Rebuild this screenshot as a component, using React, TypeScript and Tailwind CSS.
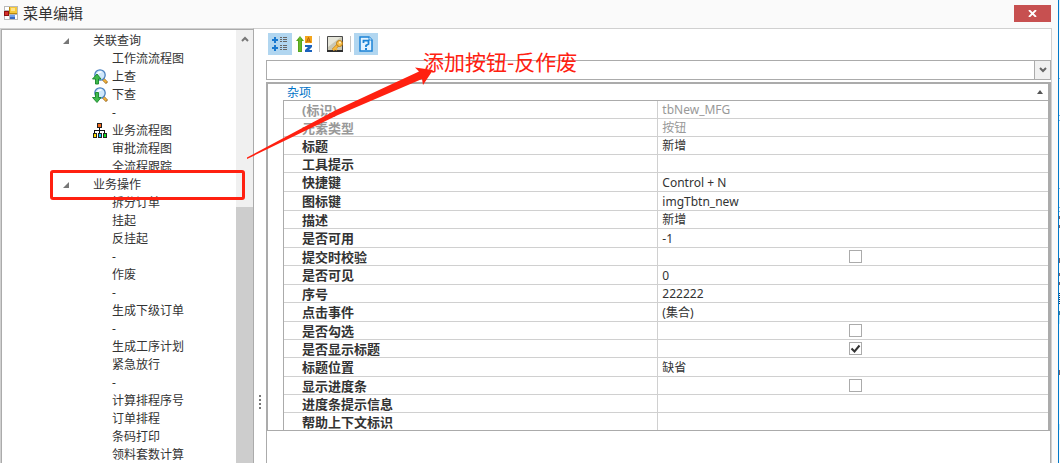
import React from 'react';

type TreeNode = {
  label: string;
  group?: boolean;
  icon?: 'up' | 'down' | 'flow';
};

type Property = {
  name: string;
  value?: string;
  check?: boolean;
  readOnly?: boolean;
  tall?: boolean;
};

const nodes: TreeNode[] = [
  { label: '关联查询', group: true },
  { label: '工作流流程图' },
  { label: '上查', icon: 'up' },
  { label: '下查', icon: 'down' },
  { label: '-' },
  { label: '业务流程图', icon: 'flow' },
  { label: '审批流程图' },
  { label: '全流程跟踪' },
  { label: '业务操作', group: true },
  { label: '拆分订单' },
  { label: '挂起' },
  { label: '反挂起' },
  { label: '-' },
  { label: '作废' },
  { label: '-' },
  { label: '生成下级订单' },
  { label: '-' },
  { label: '生成工序计划' },
  { label: '紧急放行' },
  { label: '-' },
  { label: '计算排程序号' },
  { label: '订单排程' },
  { label: '条码打印' },
  { label: '领料套数计算' },
];

const properties: Property[] = [
  { name: '(标识)', value: 'tbNew_MFG', readOnly: true },
  { name: '元素类型', value: '按钮', readOnly: true },
  { name: '标题', value: '新增' },
  { name: '工具提示', value: '' },
  { name: '快捷键', value: 'Control + N', tall: true },
  { name: '图标键', value: 'imgTbtn_new', tall: true },
  { name: '描述', value: '新增' },
  { name: '是否可用', value: '-1', tall: true },
  { name: '提交时校验', check: false },
  { name: '是否可见', value: '0', tall: true },
  { name: '序号', value: '222222' },
  { name: '点击事件', value: '(集合)', tall: true },
  { name: '是否勾选', check: false },
  { name: '是否显示标题', check: true },
  { name: '标题位置', value: '缺省', tall: true },
  { name: '显示进度条', check: false },
  { name: '进度条提示信息', value: '' },
  { name: '帮助上下文标识', value: '' },
];

const AppIcon = () => (
  <svg width="14" height="14" viewBox="0 0 14 14" shapeRendering="crispEdges">
    <path d="M0 0h14v14H0z" fill="#b9b9b9" />
    <path d="M1 1h4v3H1zM1 10h4v3H1zM11 9h2v4h-2z" fill="#fff" />
    <path d="M5 1h8v7H5z" fill="#b98a10" />
    <path d="M6 1h7v6H6z" fill="#f5c83a" />
    <path d="M7 2h4v3H7z" fill="#ffe48a" />
    <path d="M0 5h5v5H0z" fill="#8e1111" />
    <path d="M1 6h3v3H1z" fill="#d8302a" />
    <path d="M6 9h5v4H6z" fill="#3768c0" />
    <path d="M6 9h5v2H6z" fill="#6fa0ee" />
  </svg>
);

const SearchIcon = ({ down }: { down?: boolean }) => (
  <svg width="16" height="16" viewBox="0 0 16 16">
    <path d="M11 10l4 4" stroke="#8a5a12" strokeWidth="3" />
    <path d="M11 10l3.500 3.500" stroke="#f3b33c" strokeWidth="1.800" />
    <circle cx="8" cy="6" r="5.200" fill="#cfe8fb" stroke="#4a80bf" strokeWidth="1.300" />
    <path d="M5.500 5q1-2.500 4-2" stroke="#fff" strokeWidth="1.500" fill="none" />
    {down ? (
      <path d="M3.500 5.500h3v5h2.500L5 15.500.5 10.500h3z" fill="#3fba4d" stroke="#168528" strokeWidth=".9" />
    ) : (
      <path d="M3.500 15h3v-5h2.500L5 5 .5 10h3z" fill="#3fba4d" stroke="#168528" strokeWidth=".9" />
    )}
  </svg>
);

// one box on top, three below joined by a rail
const FlowIcon = () => (
  <svg width="16" height="16" viewBox="0 0 16 16" shapeRendering="crispEdges">
    <path d="M7 5h1v5H7zM2 7h11v1H2zM2 7h1v3H2zM12 7h1v3h-1z" fill="#111" />
    <path d="M5 0h5v5H5zM1 10h4v5H1zM6 10h4v5H6zM11 10h4v5h-4z" fill="#222" />
    <path d="M6 1h3v3H6z" fill="#f26a1b" />
    <path d="M2 11h2v3H2z" fill="#ffe000" />
    <path d="M7 11h2v3H7z" fill="#12c4f5" />
    <path d="M12 11h2v3h-2z" fill="#12dd22" />
  </svg>
);

const CategoryIcon = () => (
  <svg width="16" height="16" viewBox="0 0 16 16" shapeRendering="crispEdges">
    <path d="M2 1h2v2h2v2H4v2H2V5H0V3h2zM2 9h2v2h2v2H4v2H2v-2H0v-2h2z" fill="#1878cf" />
    <path d="M8 1h2v1H8zM11 1h4v1h-4zM8 3h2v1H8zM11 3h4v1h-4zM8 5h2v1H8zM11 5h4v1h-4zM8 9h2v1H8zM11 9h4v1h-4zM8 11h2v1H8zM11 11h4v1h-4zM8 13h2v1H8zM11 13h4v1h-4z" fill="#666" />
  </svg>
);

const SortIcon = () => (
  <svg width="17" height="16" viewBox="0 0 17 16">
    <path d="M4 0l4 5H6v11H2V5H0z" fill="#56a51c" />
    <path d="M4 1v14" stroke="#7cc63a" />
    <path d="M9 0h7v7H9z" fill="#f4a51c" />
    <path d="M10.500 6.500l2-5 2 5M11 5h3" stroke="#b86405" fill="none" />
    <path d="M9 9h7v2l-3 3h3v2H9v-2l3-3H9z" fill="#1a62bd" />
  </svg>
);

const KeyPageIcon = () => (
  <svg width="16" height="16" viewBox="0 0 16 16">
    <path d="M.5.5h15v15H.5z" fill="#c9c7b4" stroke="#4b4b4b" />
    <path d="M1 1h13L1 11z" fill="#e6e6da" />
    <path d="M0 14h16v2H0z" fill="#2f2f2f" />
    <path d="M11 9l-5 5" stroke="#b87912" strokeWidth="3" />
    <path d="M11 9l-5 5M8 12l2 2" stroke="#f7b93d" strokeWidth="2" />
    <circle cx="12.500" cy="7.500" r="3" fill="#f9c14b" stroke="#bf7d13" />
    <circle cx="13" cy="6.500" r="1" fill="#fff3cf" />
  </svg>
);

const HelpIcon = () => (
  <svg width="14" height="16" viewBox="0 0 14 16">
    <path d="M1 1h9l3 3v11H1z" fill="#e3f3ff" stroke="#1b83d6" strokeWidth="1.500" />
    <path d="M10 1v3h3" fill="#fff" stroke="#1b83d6" />
    <path d="M4.500 7V4.700h5V8L7 9.500V11" fill="none" stroke="#1b83d6" strokeWidth="1.800" />
    <path d="M6 12h2v2H6z" fill="#1b83d6" />
  </svg>
);

const Tree = () => (
  <div className="flex w-[254px] shrink-0 border-l border-t border-r border-l-[#d0d0d0] border-t-[#d0d0d0] border-r-[#ababab]">
    <div className="flex min-w-0 flex-1 border-l border-t border-[#ababab]">
      <ul className="relative min-w-0 flex-1 overflow-hidden pt-0.5">
        {nodes.map((node, idx) => (
          <li key={idx} className="flex h-[18px] items-center whitespace-nowrap text-xs leading-[18px]">
            <span className="flex w-[90px] shrink-0 pl-[61px]">
              {node.group && (
                <svg width="6" height="6" viewBox="0 0 6 6">
                  <path d="M6 0v6H0z" fill="#777" />
                </svg>
              )}
            </span>
            {!node.group && (
              <span className="flex w-5 shrink-0">
                {node.icon === 'up' && <SearchIcon />}
                {node.icon === 'down' && <SearchIcon down />}
                {node.icon === 'flow' && <FlowIcon />}
              </span>
            )}
            <span className={node.group ? 'pl-px' : ''}>{node.label}</span>
          </li>
        ))}
      </ul>
      <div className="flex w-[17px] shrink-0 flex-col bg-[#f0f0f0]">
        <button type="button" aria-label="向上滚动" className="flex h-[17px] items-center justify-center">
          <svg width="8" height="6" viewBox="0 0 8 6">
            <path d="M1 5l3-3 3 3" fill="none" stroke="#777" strokeWidth="2" />
          </svg>
        </button>
        <div className="mt-40 flex-1 bg-[#cdcdcd]" />
      </div>
    </div>
  </div>
);

const Toolbar = () => (
  <div className="flex h-[22px] items-center pl-0.5">
    <button type="button" aria-label="按分类" className="flex h-[22px] w-6 items-center justify-center bg-[#b1d6f0]">
      <CategoryIcon />
    </button>
    <button type="button" aria-label="按字母" className="ml-1 flex w-[17px]">
      <SortIcon />
    </button>
    <span className="ml-1.5 h-4 w-px bg-[#c6c6c6]" />
    <button type="button" aria-label="属性页" className="ml-[7px] flex w-4">
      <KeyPageIcon />
    </button>
    <span className="ml-[7px] h-4 w-px bg-[#c6c6c6]" />
    <button type="button" aria-label="说明" className="ml-[3px] flex h-[22px] w-6 items-center justify-center bg-[#b1d6f0]">
      <HelpIcon />
    </button>
  </div>
);

const PropertyGrid = () => (
  <div className="border border-r-2 border-t-2 border-[#ababab]">
    <div className="flex h-4 items-center justify-between pl-[19px] pr-[5px] text-xs leading-4 text-[#0072c6]">
      <span className="pt-0.5">杂项</span>
      <svg width="6" height="4" viewBox="0 0 6 4">
        <path d="M3 0l3 4H0z" fill="#555" />
      </svg>
    </div>
    <table className="ml-[15px] w-[calc(100%-15px)] table-fixed border-separate border-spacing-0 border-l border-t border-[#ababab]">
      <colgroup>
        <col className="w-[49%]" />
        <col />
      </colgroup>
      <tbody>
        {properties.map((prop) => (
          <tr key={prop.name} className={`group last:h-[17px] ${prop.tall ? 'h-[19px]' : 'h-[18px]'} ${prop.readOnly ? 'text-[#999]' : ''}`}>
            <th
              scope="row"
              className="border-r border-b border-[#d0d0d0] p-0 pl-[18px] text-left text-[13px] leading-4 font-bold group-last:border-b-0"
            >
              {prop.name}
            </th>
            <td className="border-b border-[#d0d0d0] p-0 pl-1 text-xs leading-4 group-last:border-b-0">
              {prop.check === undefined ? (
                <span className="block pt-px">{prop.value}</span>
              ) : (
                <label className="relative mx-auto flex size-[13px]">
                  <input
                    type="checkbox"
                    aria-label={prop.name}
                    defaultChecked={prop.check}
                    className="peer size-[13px] appearance-none border border-[#ababab] bg-white"
                  />
                  <svg className="absolute inset-0 hidden peer-checked:block" width="13" height="13" viewBox="0 0 13 13">
                    <path d="M2.500 6.500l3 3 5-6" fill="none" stroke="#333" strokeWidth="2" />
                  </svg>
                </label>
              )}
            </td>
          </tr>
        ))}
      </tbody>
    </table>
  </div>
);

// sliver of the window behind
const BackWindow = () => (
  <div className="w-px shrink-0 overflow-hidden bg-[#f8fcff]">
    <svg width="1" height="463" viewBox="0 0 1 463" shapeRendering="crispEdges">
      <path d="M0 0h1v20H0z" fill="#e3f0fa" />
      <path d="M0 78h1v1H0zM0 115h1v1H0zM0 120h1v1H0zM0 188h1v1H0zM0 207h1v1H0zM0 211h1v1H0z" fill="#7ab8e8" />
      <path d="M0 216h1v3H0zM0 225h1v3H0zM0 258h1v5H0zM0 273h1v3H0zM0 282h1v3H0zM0 370h1v5H0z" fill="#80646a" />
      <path d="M0.500 293v11" stroke="#1b3f66" strokeDasharray="1 1" />
      <path d="M0 311h1v4H0z" fill="#3f7e9e" />
      <path d="M0 315h1v9H0zM0 424h1v6H0z" fill="#c5ecfb" />
    </svg>
  </div>
);

const App: React.FC = () => {
  return (
    <div className="relative flex h-screen overflow-hidden bg-[#fafafa] font-['Noto_Sans','Noto_Sans_CJK_SC',sans-serif] text-[#333]">
      <div className="flex min-w-0 flex-1 flex-col">
        <header className="flex h-7 shrink-0 items-center justify-between pb-0.5 pl-1 pr-[7px]">
          <h1 className="flex items-center gap-[5px] text-[15px] leading-5">
            <AppIcon />
            菜单编辑
          </h1>
          <button type="button" aria-label="关闭" className="flex h-[17px] w-[37px] items-center justify-center bg-[#c75050]">
            <svg width="9" height="7" viewBox="0 0 9 7">
              <path d="M1 0l7 7M8 0L1 7" stroke="#fff" strokeWidth="1.800" />
            </svg>
          </button>
        </header>

        <main className="mr-1.5 flex min-h-0 flex-1 bg-white">
          <Tree />
          <div className="flex w-3 shrink-0 flex-col items-center border-t border-[#d0d0d0] pt-[366px]">
            <div className="flex flex-col gap-0.5">
              <i className="size-0.5 bg-[#777]" />
              <i className="size-0.5 bg-[#777]" />
              <i className="size-0.5 bg-[#777]" />
              <i className="size-0.5 bg-[#777]" />
            </div>
          </div>
          <section className="flex min-w-0 flex-1 flex-col border-r border-t border-[#d0d0d0] pt-1">
            <Toolbar />
            <div className="relative mt-[5px] flex shrink-0">
              <select
                aria-label="对象"
                className="h-5 w-full appearance-none border border-[#ababab] bg-white"
              />
              <span className="pointer-events-none absolute inset-y-0 right-0 flex w-[17px] items-center justify-center border border-[#ababab] bg-[#f0f0f0]">
                <svg width="8" height="6" viewBox="0 0 8 6">
                  <path d="M1 1l3 3 3-3" fill="none" stroke="#666" strokeWidth="2" />
                </svg>
              </span>
            </div>
            <div className="mt-0.5 min-h-0 flex-1 border-l border-r border-[#ababab]">
              <PropertyGrid />
            </div>
          </section>
        </main>
      </div>
      <div className="w-px shrink-0 bg-[#0078c8]" />
      <BackWindow />

      {/* markup drawn over the window */}
      <div className="absolute left-[50px] top-[170px] h-[30px] w-[195px] rounded-[3px] border-[3px] border-[#ff2010]" />
      <svg className="absolute left-[246px] top-[62px]" width="190" height="98" viewBox="0 0 190 98">
        <path d="M1 95.500L90 48 173 9.500 169 5.500 187 8 177 23 176 17 92 53 1 97z" fill="#ff2010" />
      </svg>
      <p className="absolute left-[423px] top-[46px] whitespace-nowrap text-[21px] leading-[30px] font-['Noto_Sans_CJK_SC',sans-serif] text-[#ff2010]">
        添加按钮-反作废
      </p>
    </div>
  );
};

export default App;
